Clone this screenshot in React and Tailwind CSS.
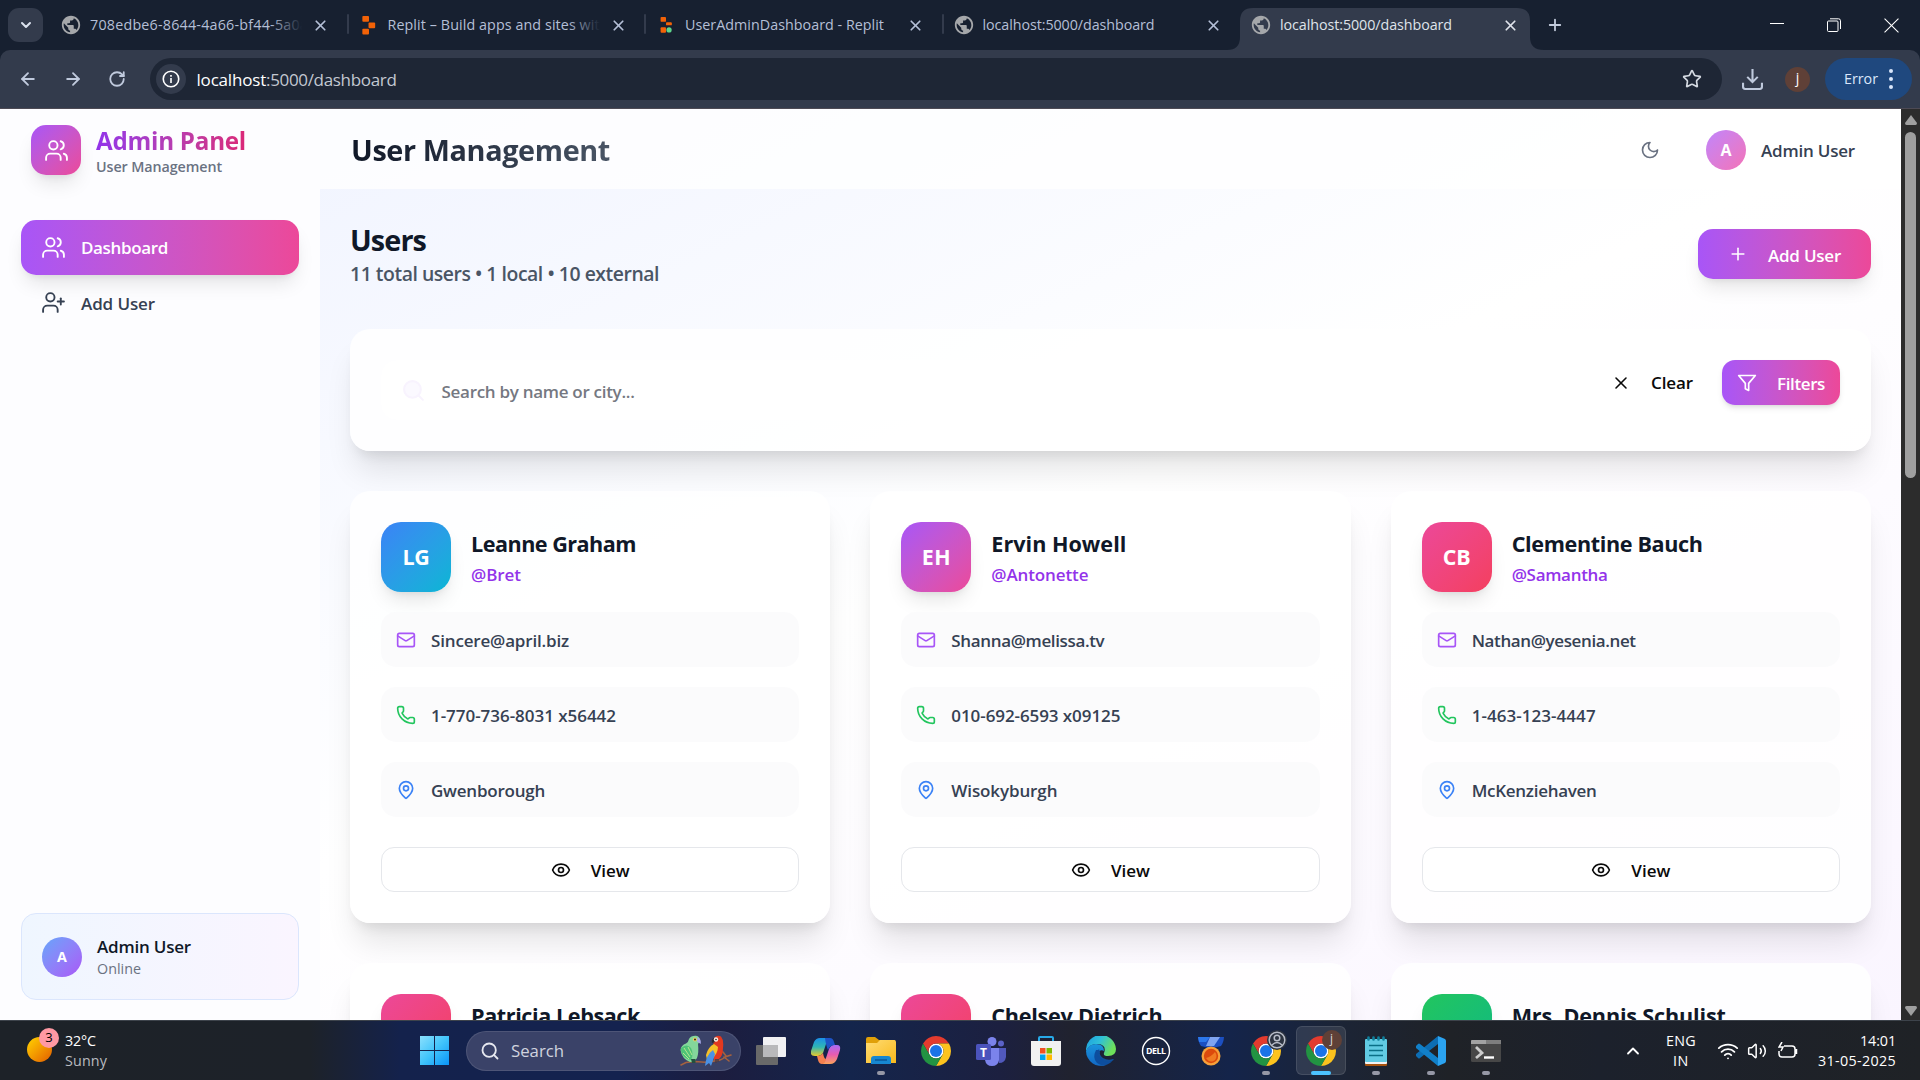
import React, { useLayoutEffect, useRef, useState } from "react";
import {
  ArrowLeft, ArrowRight, RotateCw, X, Plus, Star, Users, UserPlus,
  Mail, Phone, MapPin, Eye, Search, ChevronDown, ChevronUp, Wifi, Volume2,
} from "lucide-react";
import { MdPublic } from "react-icons/md";

/* One line of text, tracked so that it fills a given width. */
function Fit({ w, className = "", children }) {
  const ref = useRef(null);
  const [ls, setLs] = useState(0);
  useLayoutEffect(() => {
    const r = document.createRange();
    r.selectNodeContents(ref.current);
    const natural = r.getBoundingClientRect().width;
    setLs((w - natural) / String(children).length);
  }, [w, children]);
  return (
    <span ref={ref} className={`block w-fit shrink-0 whitespace-pre ${className}`} style={{ letterSpacing: `${ls}px` }}>
      {children}
    </span>
  );
}

const Moon = () => (
  <svg viewBox="0 0 24 24" className="size-5" fill="none" stroke="currentColor" strokeWidth="2" strokeLinecap="round" strokeLinejoin="round">
    <path d="M12 3a6 6 0 0 0 9 9 9 9 0 1 1-9-9Z" />
  </svg>
);
const FilterIcon = () => (
  <svg viewBox="0 0 24 24" className="size-5" fill="none" stroke="currentColor" strokeWidth="2" strokeLinecap="round" strokeLinejoin="round">
    <polygon points="22 3 2 3 10 12.46 10 19 14 21 14 12.46 22 3" />
  </svg>
);
const ReplitIcon = () => (
  <svg viewBox="0 0 14 20" className="h-[19px] w-[14px]" fill="#f26207">
    <rect x="0" y="0" width="7" height="6" rx="1" />
    <rect x="6.5" y="6.8" width="7" height="6" rx="1" />
    <rect x="0" y="13.5" width="7" height="6" rx="1" />
  </svg>
);
const ReplitAppIcon = () => (
  <svg viewBox="0 0 14 20" className="h-[18px] w-[14px]" fill="#f26207">
    <rect x="1" y="1" width="6" height="5.5" rx="1" />
    <rect x="7" y="7" width="6.5" height="3.4" rx="1" />
    <rect x="1" y="12.5" width="6" height="6" rx="1" />
    <circle cx="10.4" cy="15.5" r="2.9" fill="#5fd68b" />
  </svg>
);

function Tab({ icon, title, w, active, fade }) {
  return (
    <div className={`relative flex h-[42px] w-[297.5px] shrink-0 items-center pb-2 ${active ? "text-[#dfe3ea]" : "text-[#b4bfd6]"}`}>
      {active && (
        <div className="absolute -left-[13px] top-0 h-[42px] w-[317px]">
          <svg viewBox="0 0 317 42" className="size-full" fill="#333b4c">
            <path d="M0 42 Q13 42 13 29 V13 Q13 0 26 0 H290 Q303 0 303 13 V29 Q303 42 317 42 Z" />
          </svg>
        </div>
      )}
      <div className="relative ml-[10px] flex w-[22px] justify-center">{icon}</div>
      <div className="relative ml-[8px] w-[212px] overflow-hidden text-[14.3px] leading-5">
        <Fit w={w}>{title}</Fit>
        {fade && <div className="absolute right-0 top-0 h-5 w-8 bg-gradient-to-r from-transparent to-[#172030]" />}
      </div>
      <X className="relative ml-[10px] size-[17px]" strokeWidth={2.4} />
    </div>
  );
}
const Sep = () => <div className="-mx-px mt-[6px] h-5 w-[2px] shrink-0 rounded bg-[#333b4c]" />;
const Globe = () => <MdPublic className="size-[22px] text-[#a5a7aa]" />;

function BrowserChrome() {
  return (
    <header className="h-[109px] bg-[#172030]">
      <div className="flex h-[50px] pt-2">
        <div className="ml-2 flex h-[34px] w-[35px] items-center justify-center rounded-[11px] bg-[#333b4c] text-[#dbe2ee]">
          <ChevronDown className="size-4" strokeWidth={3} />
        </div>
        <div className="ml-[7px] flex h-[42px] items-start">
          <Tab icon={<Globe />} title="708edbe6-8644-4a66-bf44-5a0a" w={218} fade />
          <Sep />
          <Tab icon={<ReplitIcon />} title="Replit – Build apps and sites with" w={221} fade />
          <Sep />
          <Tab icon={<ReplitAppIcon />} title="UserAdminDashboard - Replit" w={199} />
          <Sep />
          <Tab icon={<Globe />} title="localhost:5000/dashboard" w={172} />
          <Tab icon={<Globe />} title="localhost:5000/dashboard" w={172} active />
        </div>
        <Plus className="ml-[8px] mt-[8px] size-[18px] text-[#c3cbdc]" strokeWidth={2.4} />
        <div className="ml-auto mr-[21px] flex h-[34px] items-center gap-[43px] text-white">
          <svg viewBox="0 0 14 14" className="size-[14px]" stroke="currentColor"><path d="M0 5.5h14" /></svg>
          <svg viewBox="0 0 14 14" className="size-[14px]" stroke="currentColor" fill="none"><rect x=".5" y="3" width="10.5" height="10.5" rx="1" /><path d="M3 .8h8.5q2 0 2 2V11" /></svg>
          <svg viewBox="0 0 14 14" className="size-[15px]" stroke="currentColor"><path d="M.5.5l13 13M13.5.5l-13 13" /></svg>
        </div>
      </div>
      <div className="flex h-[59px] items-center rounded-t-[10px] border-b border-[#4d4a54] bg-[#333b4c] text-[#c0cadd]">
        <div className="ml-[18px] flex w-[132px] gap-[24.5px]">
          <ArrowLeft className="size-5" strokeWidth={2.2} />
          <ArrowRight className="size-5" strokeWidth={2.2} />
          <RotateCw className="ml-px mt-px size-[18px]" strokeWidth={2.4} />
        </div>
        <div className="flex h-[42px] w-[1572px] items-center rounded-full bg-[#1e2635]">
          <div className="ml-[6px] flex size-[30px] items-center justify-center rounded-full bg-[#333b4c] text-white">
            <svg viewBox="0 0 20 20" className="size-[18px]" fill="none" stroke="currentColor" strokeWidth="1.8"><circle cx="10" cy="10" r="8.6" /><path d="M10 9v5.5M10 5.5v2" /></svg>
          </div>
          <div className="ml-[10.5px] mt-px flex text-[17px] leading-6 text-[#c3c8d1]">
            <Fit w={69.5} className="text-white">localhost</Fit>
            <Fit w={130.5}>:5000/dashboard</Fit>
          </div>
          <Star className="ml-auto mr-[20px] size-5 text-[#d5dae2]" strokeWidth={2} strokeLinejoin="miter" />
        </div>
        <svg viewBox="0 0 20 20" className="ml-[20px] size-[21px]" fill="none" stroke="currentColor" strokeWidth="2"><path d="M10 0v12M5 7.5l5 5 5-5M1 13v4q0 2 2 2h14q2 0 2-2v-4" /></svg>
        <div className="ml-[22px] flex size-[25px] items-center justify-center rounded-full bg-[#5f4037] pb-[3px] text-[14px] text-white">j</div>
        <div className="ml-[15px] flex h-[42px] w-[87px] items-center rounded-full bg-[#1f487e] pl-[19px] text-[14.3px] text-[#dbe7fb]">
          <Fit w={34}>Error</Fit>
          <div className="ml-[11px] flex flex-col gap-[4px]">
            <i className="size-1 rounded-full bg-[#dbe7fb]" /><i className="size-1 rounded-full bg-[#dbe7fb]" /><i className="size-1 rounded-full bg-[#dbe7fb]" />
          </div>
        </div>
      </div>
    </header>
  );
}

function Sidebar() {
  return (
    <aside className="flex w-[320px] shrink-0 flex-col bg-[#fdfdff]">
      <div className="flex h-[80px] shrink-0 items-center pl-[31px] pt-[2px]">
        <div className="flex size-[50px] shrink-0 items-center justify-center rounded-[15px] bg-gradient-to-br from-[#a855f7] to-[#ec4899] text-white shadow-[0_12px_19px_-4px_rgba(0,0,0,0.1),0_5px_8px_-5px_rgba(0,0,0,0.1)]">
          <Users className="size-[25px]" strokeWidth={1.8} />
        </div>
        <div className="ml-[15px] pt-[2px]">
          <Fit w={150} className="bg-gradient-to-r from-[#9333ea] to-[#db2777] bg-clip-text text-[24.2px] font-bold leading-[32px] text-transparent">Admin Panel</Fit>
          <Fit w={126} className="text-[14.3px] font-[540] leading-5 text-gray-500">User Management</Fit>
        </div>
      </div>
      <nav className="px-[21px] pt-[31px] text-[17px]">
        <div className="flex h-[55px] items-center rounded-[15px] bg-gradient-to-r from-[#a855f7] to-[#ec4899] pl-[20px] text-white shadow-[0_12px_19px_-4px_rgba(0,0,0,0.1),0_5px_8px_-5px_rgba(0,0,0,0.1)]">
          <Users className="size-[25px]" strokeWidth={1.8} />
          <Fit w={87} className="ml-[15px] mt-px font-semibold">Dashboard</Fit>
        </div>
        <div className="flex h-[55px] items-center pl-[20px] text-gray-700">
          <UserPlus className="size-[25px]" strokeWidth={1.8} />
          <Fit w={74} className="ml-[15px] mt-[2px] font-[560]">Add User</Fit>
        </div>
      </nav>
      <div className="mx-[21px] mb-[20px] mt-auto flex h-[87px] items-center rounded-[15px] border border-[#dbe6fd] bg-gradient-to-r from-[#eff6ff] to-[#faf5ff] pl-[20px]">
        <div className="flex size-10 shrink-0 items-center justify-center rounded-full bg-gradient-to-br from-[#60a5fa] to-[#a855f7] text-[14.3px] font-bold text-white">A</div>
        <div className="ml-[15px]">
          <Fit w={94} className="text-[17px] font-[560] leading-[24px] text-gray-900">Admin User</Fit>
          <Fit w={44} className="text-[14.3px] leading-5 text-gray-500">Online</Fit>
        </div>
      </div>
    </aside>
  );
}

const AVATAR = {
  blue: "from-[#3b82f6] to-[#06b6d4]",
  purple: "from-[#a855f7] to-[#ec4899]",
  rose: "from-[#ec4899] to-[#f43f5e]",
  green: "from-[#22c55e] to-[#10b981]",
};
const PEOPLE = [
  { i: "LG", iw: 27, name: "Leanne Graham", nw: 165, user: "@Bret", uw: 50, mail: "Sincere@april.biz", mw: 138, tel: "1-770-736-8031 x56442", tw: 185, city: "Gwenborough", cw: 114, tone: "blue" },
  { i: "EH", iw: 29, name: "Ervin Howell", nw: 135, user: "@Antonette", uw: 97, mail: "Shanna@melissa.tv", mw: 153, tel: "010-692-6593 x09125", tw: 169, city: "Wisokyburgh", cw: 106, tone: "purple" },
  { i: "CB", iw: 28, name: "Clementine Bauch", nw: 191, user: "@Samantha", uw: 96, mail: "Nathan@yesenia.net", mw: 164, tel: "1-463-123-4447", tw: 124, city: "McKenziehaven", cw: 125, tone: "rose" },
  { name: "Patricia Lebsack", nw: 169, tone: "rose" },
  { name: "Chelsey Dietrich", nw: 171, tone: "rose" },
  { name: "Mrs. Dennis Schulist", nw: 214, tone: "green" },
];

function InfoRow({ icon, text, w }) {
  return (
    <div className="flex h-[55px] items-center rounded-[15px] bg-[#fafafb]/70 pl-[15px]">
      {icon}
      <Fit w={w} className="ml-[15px] mt-[2px] font-[560] text-gray-700">{text}</Fit>
    </div>
  );
}
function PersonCard({ p }) {
  return (
    <article className="h-[432px] rounded-[20px] bg-white/85 p-[31px] text-[17px] shadow-[0_25px_31px_-6px_rgba(0,0,0,0.1),0_10px_13px_-7px_rgba(0,0,0,0.1)]">
      <div className="flex">
        <div className={`flex size-[70px] shrink-0 items-center justify-center rounded-[20px] bg-gradient-to-br text-[21.4px] font-bold text-white shadow-[0_12px_19px_-4px_rgba(0,0,0,0.1),0_5px_8px_-5px_rgba(0,0,0,0.1)] ${AVATAR[p.tone]}`}>
          {p.i && <Fit w={p.iw}>{p.i}</Fit>}
        </div>
        <div className="ml-[20px] pt-[5px]">
          <Fit w={p.nw} className="text-[21.6px] font-bold leading-[34px] text-gray-900">{p.name}</Fit>
          {p.user && <Fit w={p.uw} className="mt-px font-[560] leading-[26px] text-[#9333ea]">{p.user}</Fit>}
        </div>
      </div>
      {p.mail && (
        <>
          <div className="mt-[20px] flex flex-col gap-[20px]">
            <InfoRow icon={<Mail className="size-5 text-[#a855f7]" />} text={p.mail} w={p.mw} />
            <InfoRow icon={<Phone className="size-5 text-[#22c55e]" />} text={p.tel} w={p.tw} />
            <InfoRow icon={<MapPin className="size-5 text-[#3b82f6]" />} text={p.city} w={p.cw} />
          </div>
          <div className="mt-[30px] flex h-[45px] items-center justify-center rounded-[13px] border border-gray-200 bg-white text-[#0a0a0a]">
            <Eye className="size-5" />
            <Fit w={39} className="ml-[20px] mt-[2px] font-[560]">View</Fit>
          </div>
        </>
      )}
    </article>
  );
}

function Main() {
  return (
    <main className="flex w-[1581px] flex-col">
      <div className="flex h-[80px] shrink-0 items-center bg-white/80 pl-[31px] pr-[46px] pt-[2px]">
        <Fit w={259} className="bg-gradient-to-r from-gray-900 to-gray-600 bg-clip-text text-[28.8px] font-bold leading-10 text-transparent">User Management</Fit>
        <div className="ml-auto text-gray-500"><Moon /></div>
        <div className="ml-[46px] flex size-10 shrink-0 items-center justify-center rounded-full bg-gradient-to-br from-[#c084fc] to-[#f472b6] text-[16px] font-bold text-white">A</div>
        <Fit w={94} className="ml-[15px] mt-[2px] text-[17px] font-[560] text-gray-700">Admin User</Fit>
      </div>
      <div className="flex flex-col pl-[30px] pr-[30px]">
        <div className="flex h-[140px] pt-[30px]">
          <div className="pt-px">
            <Fit w={76} className="text-[28.8px] font-bold leading-[40px] text-gray-900">Users</Fit>
            <Fit w={309} className="text-[19.4px] font-[540] leading-[28px] text-gray-600">11 total users • 1 local • 10 external</Fit>
          </div>
          <div className="ml-auto mt-[10px] flex h-[50px] w-[173px] items-center rounded-[15px] bg-gradient-to-r from-[#a855f7] to-[#ec4899] pl-[30px] text-[17px] font-semibold text-white shadow-[0_12px_19px_-4px_rgba(0,0,0,0.1),0_5px_8px_-5px_rgba(0,0,0,0.1)]">
            <Plus className="size-5" strokeWidth={1.9} />
            <Fit w={73} className="ml-[20px] mt-[3px]">Add User</Fit>
          </div>
        </div>
        <div className="flex h-[122px] rounded-[20px] bg-white/85 p-[31px] text-[17px] font-[560] shadow-[0_25px_31px_-6px_rgba(0,0,0,0.1),0_10px_13px_-7px_rgba(0,0,0,0.1)]">
          <div className="flex h-[60px] flex-1 items-center rounded-[15px] bg-white/50 pl-[20px]">
            <Search className="size-[25px] text-[#f8f3fe]" fill="#fbf9ff" />
            <Fit w={193} className="ml-[15.500px] mt-[3px] text-[#757881]">Search by name or city...</Fit>
          </div>
          <div className="flex h-[45px] items-center text-[#0a0a0a]">
            <X className="size-5" strokeWidth={1.9} />
            <Fit w={42} className="ml-[20px] mt-px">Clear</Fit>
          </div>
          <div className="ml-[29px] flex h-[45px] w-[118px] items-center rounded-[13px] bg-gradient-to-r from-[#a855f7] to-[#ec4899] pl-[15px] font-semibold text-white shadow-md">
            <FilterIcon />
            <Fit w={48} className="ml-[20px] mt-[2px]">Filters</Fit>
          </div>
        </div>
        <div className="mt-[40px] grid grid-cols-3 gap-[40px]">
          {PEOPLE.map((p) => <PersonCard key={p.name} p={p} />)}
        </div>
      </div>
    </main>
  );
}

function Scrollbar() {
  return (
    <div className="flex w-[19px] flex-col items-center bg-[#2c2c2c]">
      <svg viewBox="0 0 12 10" className="mt-[6px] h-[10px] w-3" fill="#9f9f9f"><path d="M6 0l6 8q0 2-1.500 2h-9Q0 10 0 8Z" /></svg>
      <div className="mt-[7px] h-[346px] w-[11px] rounded-full bg-[#9f9f9f]" />
      <svg viewBox="0 0 12 10" className="mb-[4px] mt-auto h-[10px] w-3" fill="#9f9f9f"><path d="M6 10L12 2q0-2-1.500-2h-9Q0 0 0 2Z" /></svg>
    </div>
  );
}

const Chrome = () => (
  <svg viewBox="0 0 48 48" className="size-[30px]">
    <circle cx="24" cy="24" r="12" fill="#fff" />
    <path fill="#e33b2e" d="M24 12H44.780a24 24 0 0 0-41.560 0L13.610 30A12 12 0 0 1 24 12Z" />
    <path fill="#fcc31e" d="M34.390 30L24 48A24 24 0 0 0 44.780 12H24A12 12 0 0 1 34.390 30Z" />
    <path fill="#229342" d="M13.610 30L3.220 12A24 24 0 0 0 24 48L34.390 30A12 12 0 0 1 13.610 30Z" />
    <circle cx="24" cy="24" r="9.600" fill="#1a73e8" />
  </svg>
);
const Windows = () => (
  <svg viewBox="0 0 29 29" className="size-[29px]">
    <defs><linearGradient id="win" gradientUnits="userSpaceOnUse" x1="0" y1="0" x2="29" y2="29"><stop stopColor="#8be0fd" /><stop offset=".5" stopColor="#41c4fb" /><stop offset="1" stopColor="#0a94f7" /></linearGradient></defs>
    <path fill="url(#win)" d="M0 0h14v14H0zM15 0h14v14H15zM0 15h14v14H0zM15 15h14v14H15z" />
  </svg>
);
const Birds = () => (
  <svg viewBox="0 0 52 32" className="h-8 w-[52px]">
    <path d="M1 30l5-2.500 9-1 10 .8 9-1M33 26q8 0 12-4l6-2M46 21l-3-4M44 22l5 4" fill="none" stroke="#a4613f" strokeWidth="1.600" strokeLinecap="round" />
    <path d="M9 4q2-3.500 7-3.200 4 .8 4.200 5L18 9q1 9-1 14l-3 4h-4Q2 24 .500 15 1 10 6 8.500 8.500 7 9 4Z" fill="#84d69b" />
    <path d="M1 13q6-5 10 0 3 6 0 12-8-1-10-9Z" fill="#4fc377" /><path d="M4 13l6 9M8 12l4 8M3 18l6 6" stroke="#b6e68f" strokeWidth="1" />
    <path d="M11 24h4.500v4H12Z" fill="#24503f" /><path d="M17.500 2q4 2 3.200 7L17 6.500Z" fill="#aaa9e8" /><circle cx="15" cy="4.500" r="1.900" fill="#f3d35c" /><circle cx="15" cy="4.500" r="1" fill="#322" />
    <path d="M34 3q3-3.500 7-1.500Q44 5 43 13q0 8-4 11l-5 1-1-12Z" fill="#e2391f" />
    <path d="M34 9q-6 3-8 11l1 5 5-1q6-6 6-12Z" fill="#f6c028" /><path d="M33 15q-7 5-8 16l4-3 2 3q3-8 4-12Z" fill="#4b91e4" />
    <path d="M34 3q-3 1-2 5l3-1Z" fill="#2c2730" /><circle cx="36" cy="4.500" r="2.200" fill="#f6eee6" /><circle cx="36" cy="4.500" r=".8" fill="#222" />
    <path d="M36 24v4M38 24v3" stroke="#493b44" strokeWidth="1.500" />
  </svg>
);
const TaskView = () => (
  <svg viewBox="0 0 30 28" className="h-7 w-[30px]">
    <rect y="8" width="22" height="20" rx="1" fill="#696969" /><rect x="7" width="23" height="20" rx="1" fill="#f1f1f3" /><path d="M7 8h15v12H7z" fill="#b9b9bb" />
  </svg>
);
const Copilot = () => (
  <svg viewBox="0 0 30 28" className="h-7 w-[30px]">
    <defs>
      <linearGradient id="cpa" x1="0" y1="0" x2="0" y2="1"><stop stopColor="#1b8fe8" /><stop offset=".5" stopColor="#2fb6b4" /><stop offset="1" stopColor="#e8cb2c" /></linearGradient>
      <linearGradient id="cpb" x1="0" y1="0" x2="0" y2="1"><stop stopColor="#a66bf7" /><stop offset=".5" stopColor="#e85bb0" /><stop offset="1" stopColor="#fba35a" /></linearGradient>
    </defs>
    <path d="M9 1h9q-2 2-3 6l-3 9q-2 3-5 3H4q-5 0-4-5l3-9q2-4 6-4Z" fill="url(#cpa)" />
    <path d="M19 27h-8q3-2 4-6l3-9q2-4 5-4h3q4 0 3 5l-3 9q-2 5-7 5Z" fill="url(#cpb)" />
    <path d="M14 1h5q3 0 4 4l1 3q-5 0-7 5-2-4-3-12Z" fill="#1d53c6" />
    <path d="M6 19q4 0 6-3 1 6 3 6-1 5-4 5-3 0-4-4Z" fill="#f5804f" />
  </svg>
);
const Folder = () => (
  <svg viewBox="0 0 30 27" className="h-[27px] w-[30px]">
    <defs><linearGradient id="fol" x1="0" y1="0" x2="1" y2="1"><stop stopColor="#ffdc74" /><stop offset="1" stopColor="#f9b91b" /></linearGradient></defs>
    <path d="M0 2q0-2 2-2h7l4 3h16v8H0Z" fill="#e0a008" /><path d="M0 6h11l3-3h14q2 0 2 2v21H0Z" fill="url(#fol)" />
    <path d="M5 27v-5q0-3 3-3h14q3 0 3 3v5Z" fill="#1787d0" /><path d="M9 23h12" stroke="#0b5799" strokeWidth="1.500" />
  </svg>
);
const Teams = () => (
  <svg viewBox="0 0 30 30" className="size-[30px]">
    <circle cx="25" cy="7.500" r="3" fill="#5b62c8" /><path d="M20 12h10v9q-1 6-7 6Z" fill="#5159bd" />
    <circle cx="16" cy="5.500" r="4.500" fill="#7b83eb" /><path d="M9 12h14v12q-1 6-7 6t-7-6Z" fill="#7b83eb" />
    <rect y="8" width="15" height="16" rx="1.500" fill="#4b53bc" /><text x="7.500" y="20.500" textAnchor="middle" fontSize="12" fontWeight="700" fill="#fff">T</text>
  </svg>
);
const Store = () => (
  <svg viewBox="0 0 30 30" className="size-[30px]">
    <path d="M8 6V2q0-1 1-1h12q1 0 1 1v4" fill="none" stroke="#27a9e8" strokeWidth="2" /><path d="M0 5h30v22q0 3-3 3H3q-3 0-3-3Z" fill="#f1f1f1" />
    <path d="M9 12h5.500v5.500H9z" fill="#f25022" /><path d="M15.500 12H21v5.500h-5.500z" fill="#7fba00" /><path d="M9 18.500h5.500V24H9z" fill="#00a4ef" /><path d="M15.500 18.500H21V24h-5.500z" fill="#ffb900" />
  </svg>
);
const Edge = () => (
  <svg viewBox="0 0 30 30" className="size-[30px]">
    <defs>
      <linearGradient id="eda" x1="0" y1="0" x2="1" y2=".4"><stop stopColor="#1b9de2" /><stop offset=".5" stopColor="#2fc0d8" /><stop offset="1" stopColor="#6ee05a" /></linearGradient>
      <linearGradient id="edb" x1="0" y1="0" x2="0" y2="1"><stop stopColor="#1a95dd" /><stop offset="1" stopColor="#1268c4" /></linearGradient>
    </defs>
    <path d="M0 15A15 15 0 0 1 30 13q0 7-8 7-5 0-4-3 3-8-6-9Q4 7 0 15Z" fill="url(#eda)" />
    <path d="M0 15Q3 8 10 8q8 0 8 7-3-2-6 1-3 7 4 11 2 2 4 2A15 15 0 0 1 0 15Z" fill="url(#edb)" />
    <path d="M13 13q-5 5-1 11 5 6 14 1 3-2 1-2-5 2-10-1-4-3-3-6Z" fill="#10509c" /><path d="M10 14q-4 8 1 13 4 3 9 2 5-2 6-4-7 2-12-3-3-3-1-8Z" fill="#0d4e9e" />
  </svg>
);
const Dell = () => (
  <svg viewBox="0 0 30 30" className="size-[30px]">
    <circle cx="15" cy="15" r="13.500" fill="none" stroke="#fff" strokeWidth="1.400" /><text x="15" y="18.300" textAnchor="middle" fontSize="8.800" fontWeight="700" fill="#fff" textLength="20">DELL</text>
  </svg>
);
const Medal = () => (
  <svg viewBox="0 0 28 30" className="h-[30px] w-7">
    <path d="M1 1h26q-.5 6-3 9-10 3-20 0-2.500-3-3-9Z" fill="#1c4fc0" /><path d="M13 1h10l-6 9h-8Z" fill="#7fa4f0" /><path d="M1 1h12L9 6H2Z" fill="#2c77ea" />
    <circle cx="14" cy="20" r="9.500" fill="#f7a13a" /><circle cx="14" cy="20" r="7.200" fill="#dc4a0c" /><path d="M9 22q5-1 9-6 3 4 0 8-5 4-9-2Z" fill="#f07c22" />
  </svg>
);
const Notes = () => (
  <svg viewBox="0 0 24 30" className="h-[30px] w-6">
    <rect x="1" y="26" width="22" height="4" rx="1" fill="#a7530f" /><rect x="1" y="24" width="22" height="4" rx="1" fill="#f2f2f2" /><rect x="1" y="3" width="22" height="23" rx="1" fill="#62cbe3" />
    <path d="M5 9.500h14M5 14.500h14M5 19.500h14" stroke="#0a6f87" strokeWidth="1.600" /><path d="M4.500 1.500v2M9.500 1.500v2M14.500 1.500v2M19.500 1.500v2" stroke="#0f7f9b" strokeWidth="2.600" strokeLinecap="round" />
  </svg>
);
const VSCode = () => (
  <svg viewBox="0 0 30 30" className="size-[30px]">
    <path d="M22 0v8L4 22q-1 1-2 0l-2-2q-1-1 0-2Z" fill="#0d6db3" /><path d="M22 30v-8L4 8q-1-1-2 0L0 10q-1 1 0 2Z" fill="#1180c9" /><path d="M22 0l7 3q1 1 1 2v20q0 1-1 2l-7 3Z" fill="#2ba3f0" />
  </svg>
);
const Terminal = () => (
  <svg viewBox="0 0 30 24" className="h-[24px] w-[30px]">
    <rect y="1" width="30" height="22" rx="1.500" fill="#474747" /><path d="M0 5V2q0-1 1-1h28q1 0 1 1v3Z" fill="#a2a2a2" /><path d="M15 1h14q1 0 1 1v3H15Z" fill="#7e7e7e" />
    <path d="M5 8l6 6-6 5" fill="none" stroke="#ccc" strokeWidth="2.800" /><path d="M13 18.500h10" stroke="#fff" strokeWidth="2.400" />
  </svg>
);

function TaskItem({ children, dot, active }) {
  return (
    <div className={`relative mx-[2.500px] flex h-[49px] w-[50px] shrink-0 items-center justify-center rounded-md ${active ? "bg-white/10 ring-1 ring-inset ring-white/10" : ""}`}>
      {children}
      {dot && <div className={active ? "absolute bottom-0 h-1 w-5 rounded-full bg-[#4cc2ff]" : "absolute bottom-0 h-1 w-2 rounded-full bg-[#9698a6]"} />}
    </div>
  );
}

function Taskbar() {
  return (
    <footer className="flex h-[60px] items-center border-t border-[#3d434b] bg-[linear-gradient(90deg,#1d2228_0px,#1d2229_310px,#14224c_400px,#14224f_620px,#1c1d3f_720px,#14254c_850px,#1c2040_1000px,#20222f_1070px,#14244a_1230px,#1c2434_1350px,#1f2227_1450px,#1c212c_1600px,#1f2226_1920px)] text-white">
      <div className="relative ml-[27px] h-10 w-[38px] shrink-0">
        <div className="absolute left-0 top-[6px] size-[25px] rounded-full bg-gradient-to-br from-[#ffd400] to-[#e05a00]" />
        <div className="absolute left-[12px] top-[-3px] flex size-5 items-center justify-center rounded-full bg-[#ff99a4] text-[13px] text-black">3</div>
      </div>
      <div className="w-[354px] shrink-0 text-[14.300px] leading-5">
        <Fit w={31}>32°C</Fit>
        <Fit w={42} className="text-[#b9bcc0]">Sunny</Fit>
      </div>
      <div className="ml-px flex items-center">
        <div className="mr-[17px]"><Windows /></div>
        <div className="mr-[2px] flex h-10 w-[275px] shrink-0 items-center rounded-full bg-[#3a4268] pl-[14px] ring-1 ring-inset ring-white/10">
          <Search className="size-5 text-[#e6e8f0]" strokeWidth={2.2} />
          <Fit w={53} className="ml-[11px] text-[16.800px] text-[#d0d3df]">Search</Fit>
          <div className="ml-auto mr-[9px]"><Birds /></div>
        </div>
        <TaskItem><TaskView /></TaskItem>
        <TaskItem><Copilot /></TaskItem>
        <TaskItem dot><Folder /></TaskItem>
        <TaskItem><Chrome /></TaskItem>
        <TaskItem><Teams /></TaskItem>
        <TaskItem><Store /></TaskItem>
        <TaskItem><Edge /></TaskItem>
        <TaskItem><Dell /></TaskItem>
        <TaskItem><Medal /></TaskItem>
        <TaskItem dot>
          <Chrome />
          <svg viewBox="0 0 20 20" className="absolute right-[4px] top-[4px] size-5"><circle cx="10" cy="10" r="10" fill="#2c3340" /><circle cx="10" cy="10" r="7.800" fill="none" stroke="#b8bdc8" strokeWidth="1.500" /><circle cx="10" cy="8" r="2.800" fill="none" stroke="#b8bdc8" strokeWidth="1.500" /><path d="M5 15q5-5 10 0" fill="none" stroke="#b8bdc8" strokeWidth="1.500" /></svg>
        </TaskItem>
        <TaskItem dot active>
          <Chrome />
          <div className="absolute right-[4px] top-[4px] flex size-5 items-center justify-center rounded-full bg-[#5f4037] pb-[3px] text-[12px] text-[#ddd]">j</div>
        </TaskItem>
        <TaskItem dot><Notes /></TaskItem>
        <TaskItem dot><VSCode /></TaskItem>
        <TaskItem dot><Terminal /></TaskItem>
      </div>
      <div className="ml-auto mr-[24px] flex shrink-0 items-center">
        <ChevronUp className="size-5" strokeWidth={2.2} />
        <div className="ml-[23px] flex w-[30px] flex-col items-center text-[14.300px] leading-5"><Fit w={30}>ENG</Fit><Fit w={16}>IN</Fit></div>
        <Wifi className="ml-[21px] size-[22px]" strokeWidth={2} />
        <Volume2 className="ml-[8px] size-5" strokeWidth={1.8} />
        <svg viewBox="0 0 20 18" className="ml-[11px] h-[18px] w-5" fill="none" stroke="currentColor" strokeWidth="1.500"><path d="M6 4h8q3 0 3 3v5q0 3-3 3H4q-3 0-3-3V9M18.500 7v5" /><path d="M4 0L1 5h4L3 9" /></svg>
        <div className="ml-[20px] flex w-[78px] flex-col items-end text-[14.300px] leading-5"><Fit w={36}>14:01</Fit><Fit w={78}>31-05-2025</Fit></div>
      </div>
    </footer>
  );
}

export default function App() {
  return (
    <div className="flex h-[1080px] w-[1920px] flex-col overflow-hidden font-['Open_Sans',sans-serif]">
      <BrowserChrome />
      <div className="flex h-[911px] overflow-hidden bg-gradient-to-br from-[#eef2ff] via-white to-[#faf5ff]">
        <Sidebar />
        <Main />
        <Scrollbar />
      </div>
      <Taskbar />
    </div>
  );
}
